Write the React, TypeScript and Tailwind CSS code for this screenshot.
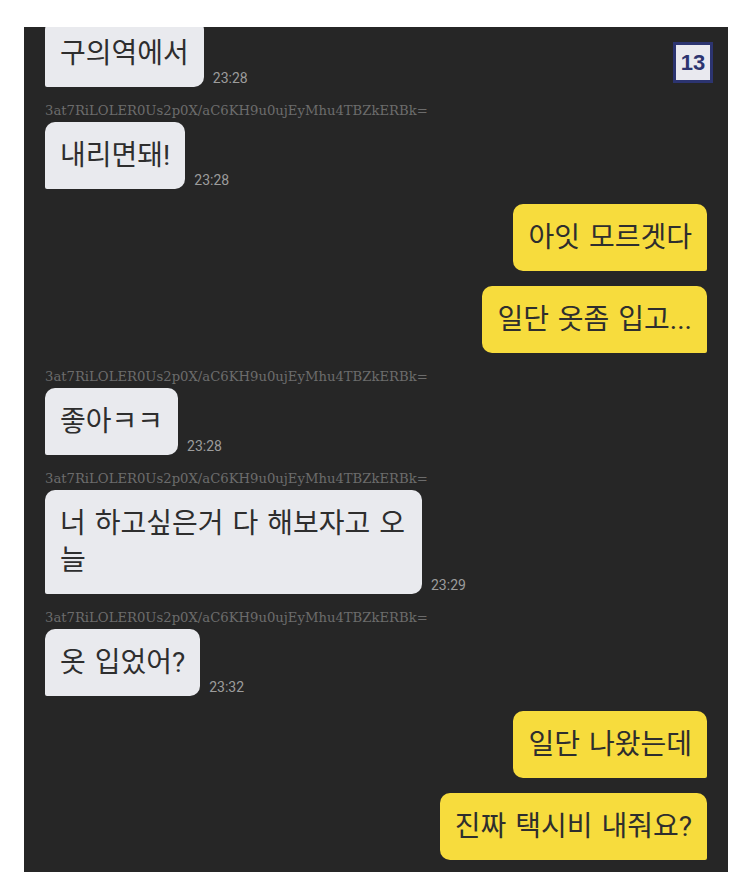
import React from "react";

const NAME = "3at7RiLOLER0Us2p0X/aC6KH9u0ujEyMhu4TBZkERBk=";

type Msg =
  | { kind: "in"; text: string; time: string; name?: boolean; first?: boolean }
  | { kind: "out"; text: string };

const messages: Msg[] = [
  { kind: "in", text: "구의역에서", time: "23:28", first: true },
  { kind: "in", text: "내리면돼!", time: "23:28", name: true },
  { kind: "out", text: "아잇 모르겟다" },
  { kind: "out", text: "일단 옷좀 입고..." },
  { kind: "in", text: "좋아ㅋㅋ", time: "23:28", name: true },
  { kind: "in", text: "너 하고싶은거 다 해보자고 오늘", time: "23:29", name: true },
  { kind: "in", text: "옷 입었어?", time: "23:32", name: true },
  { kind: "out", text: "일단 나왔는데" },
  { kind: "out", text: "진짜 택시비 내줘요?" },
];

const bubbleText =
  "px-[15px] py-[15px] text-[28px] leading-[37px] [word-spacing:2px] text-[#2e2e2e] [font-family:Roboto,'Noto_Sans_CJK_KR',sans-serif]";

function Incoming({ m }: { m: Extract<Msg, { kind: "in" }> }) {
  return (
    <div className={m.first ? "-mt-[7px]" : "mt-[15px]"}>
      {m.name && (
        <div className="mb-[2px] text-[13.2px] leading-[18px] text-[#6c6c6c] [font-family:'DejaVu_Serif',serif]">
          {NAME}
        </div>
      )}
      <div className="flex items-end">
        <div
          className={`max-w-[377px] rounded-[10px] rounded-bl-[2px] bg-[#e9eaee] ${bubbleText}`}
        >
          {m.text}
        </div>
        <span className="ml-[9px] mb-[1px] text-[14px] leading-[16px] text-[#9c9c9c] [font-family:Roboto,sans-serif]">
          {m.time}
        </span>
      </div>
    </div>
  );
}

function Outgoing({ text }: { text: string }) {
  return (
    <div className="mt-[15px] flex justify-end">
      <div className={`rounded-[10px] rounded-br-[2px] bg-[#f7dc3d] ${bubbleText}`}>{text}</div>
    </div>
  );
}

export default function App() {
  return (
    <div className="min-h-[872px] bg-white pl-[24px] pr-[24px] pt-[27px]">
      <div className="relative h-[845px] overflow-hidden bg-[#262626] px-[21px]">
        {messages.map((m, i) =>
          m.kind === "in" ? <Incoming key={i} m={m} /> : <Outgoing key={i} text={m.text} />
        )}
        <div className="absolute right-[15px] top-[15px] flex h-[41px] w-[40px] items-center justify-center border-[3px] border-[#2c3470] bg-[#e9e9ef] text-[22px] font-bold text-[#2c3470] [font-family:'Liberation_Sans',sans-serif]">
          13
        </div>
      </div>
    </div>
  );
}
